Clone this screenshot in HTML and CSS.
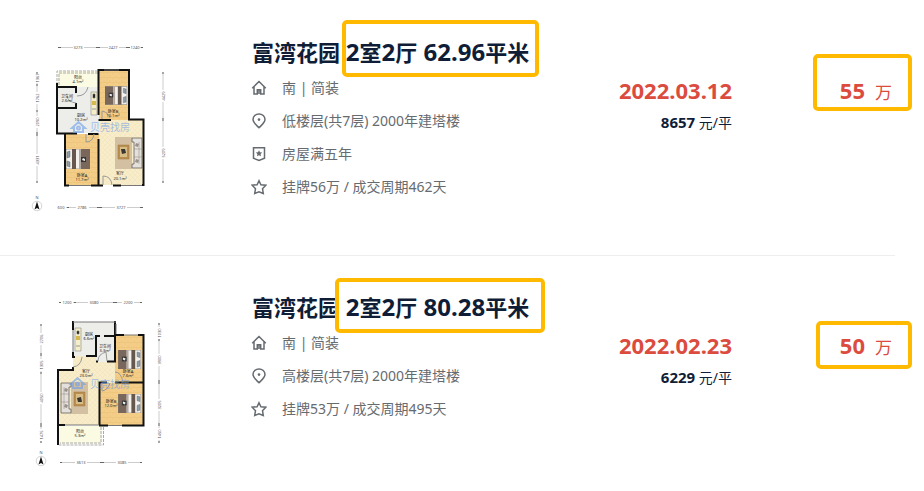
FILE: index.html
```html
<!DOCTYPE html>
<html lang="zh-CN">
<head>
<meta charset="utf-8">
<title>富湾花园 成交记录</title>
<link rel="stylesheet" href="styles.css">
</head>
<body>
<svg class="symbols" aria-hidden="true">
  <symbol id="i-home" viewBox="0 0 16 16"><path d="M1.200 8.200 8 1.500l6.800 6.700M3 6.800V14h3.300V9.700h3.400V14H13V6.800M8 10v4"/></symbol>
  <symbol id="i-pin" viewBox="0 0 16 16"><path d="M8 14.800C5 11.800 2 9.500 2 6.600a6 5.700 0 0 1 12 0c0 2.900-3 5.200-6 8.200z"/><circle cx="8" cy="6.600" r="1.300" class="solid"/></symbol>
  <symbol id="i-badge" viewBox="0 0 16 16"><path d="M2.500 1.700h11v10.600L8 14.500l-5.500-2.200z"/><path class="solid" d="m8 4.200 1 2.100 2.200.3-1.600 1.500.4 2.200-2-1-2 1 .4-2.200-1.600-1.500 2.200-.3z"/></symbol>
  <symbol id="i-star" viewBox="0 0 16 16"><path d="m8 1.700 1.900 4 4.900.5-3.300 3.500.8 4.800L8 12.900l-4.300 1.600.8-4.800L1.200 6.200l4.900-.5z"/></symbol>
  <symbol id="bed" viewBox="0 0 24 20">
    <path fill="#f4f1ec" stroke="#77706a" stroke-width=".6" d="M0 0h24v20H0z"/>
    <path fill="#78675a" d="M0 0h9v20H0z"/><path fill="#b3aaa3" d="M9 0h2v20H9z"/><path fill="#66584f" d="M14 0h4v20h-4z"/>
    <path fill="#333" d="M4 7h5v5H4z"/><path fill="#eee" d="m5 8 3 1-1 2-2-1z"/>
    <path fill="#8d9ead" stroke="#555" stroke-width=".4" d="m20 2 3 1v5l-3-1zM20 12l3-1v6l-3 1z"/>
  </symbol>
  <symbol id="sofa" viewBox="0 0 28 32">
    <path fill="#d3c0a2" d="M0 0h17v32H0z"/><path fill="#b88f4f" stroke="#a1783c" stroke-width=".5" d="M3 8h11v14H3z"/>
    <path fill="#d9bd86" d="M5 10h7v10H5z"/><path fill="#393531" d="M6 12h4l1 4-4 1z"/>
    <path fill="#e4e0dc" stroke="#665f59" stroke-width=".8" d="M17 1h10v30H17v-4h2V5h-2z"/>
    <path stroke="#8d8681" stroke-width=".5" fill="none" d="M19 12h8M19 20h8M24 5v22"/>
    <path fill="#99918c" d="m21 6 3 1-1 3-3-1zm0 16 3 1-1 3-3-1z"/>
  </symbol>
  <symbol id="compass" viewBox="0 0 12 18">
    <circle cx="6" cy="12" r="4.800" fill="none" stroke="#aaa" stroke-width=".5"/>
    <path fill="#111" d="m6 7.500 2.500 8L6 14l-2.500 1.500z"/>
  </symbol>
  <pattern id="wood" width="6" height="5" patternUnits="userSpaceOnUse"><path fill="#f4ce88" d="M0 0h6v5H0z"/><path stroke="#e8bb70" stroke-width=".4" d="M0 2.500h6M2 0v2.500M5 2.500V5"/></pattern>
  <pattern id="tile" width="5" height="5" patternUnits="userSpaceOnUse"><path fill="#f8edca" d="M0 0h5v5H0z"/><path stroke="#f0e0b4" stroke-width=".4" d="M0 0l5 5M5 0 0 5"/></pattern>
</svg>

<main class="deals">
  <article class="deal">
    <svg class="plan" viewBox="20 30 160 190" role="img" aria-label="户型图 62.96平米">
      <path fill="#ededea" d="M57 87h42v46H57z"/>
      <path fill="#fafbe2" d="M58 71h40v16H58z"/>
      <path fill="url(#wood)" d="M99 71h30v49H99zM65 134h34v51H65z"/>
      <path fill="url(#tile)" d="M99 120h44v65H99z"/>
      <path class="dash" d="M98 71H57v16M98 73H59v14"/>
      <path class="wall" d="M57 83v50.500h20M57 87h19v6M76 103v5H57M76 108h-1M98.500 69.500V115M97.500 70H129v49.500h14.500V185H142M98.500 120H111M98.500 139v47M98.500 134H88M65 134v51.500h4M91 185.500h12M113 185.500h8"/>
      <path class="window" d="M69 185.500h22M121 185.500h21M104 70h15"/>
      <path class="door" d="M77 96q9 0 11-9M76 103q-8-1-9-7M86 134v8q7 0 8-8M103 185v-9q8 0 9 9M102 119v-8q6 1 8 7"/>
      <path fill="#f4efca" stroke="#888" stroke-width=".6" d="M91 92h6v23h-6z"/><path fill="#d6b94e" d="M92 101h4v4h-4z"/><path stroke="#777" stroke-width=".7" d="M93 94h2v4h-2zM92 109h4"/>
      <use href="#bed" x="105" y="86" width="22" height="19"/>
      <use href="#bed" x="66" y="149" width="24" height="20" transform="rotate(180 78 159)"/>
      <use href="#sofa" x="115" y="137" width="28" height="32"/>
      <g class="watermark"><path d="m72 128 6.500-6 6.500 6h-2v4h-9v-4z"/><circle cx="78.500" cy="128" r="1.500"/><text x="90" y="131">贝壳找房</text></g>
      <g class="room"><text x="78" y="79">阳台</text><text x="78" y="83">4.1m²</text><text x="67" y="98">卫生间</text><text x="67" y="102">2.6m²</text><text x="81" y="117">厨房</text><text x="81" y="121">10.2m²</text><text x="113" y="113">卧室B</text><text x="113" y="117">10.1m²</text><text x="82" y="177">卧室A</text><text x="82" y="181">11.7m²</text><text x="120" y="175">客厅</text><text x="120" y="180">20.1m²</text></g>
      <path class="dim" d="M58 47.500h15M84 47.500h24M119 47.500h10M140 47.500h3M66 207.500h10M89 207.500h26M127 207.500h16M37 72v1M37 83v9M37 104v12M37 128v26M37 166v17M163 72v18M163 102v45M163 159v24"/>
      <path class="ticks" d="M58 47.500h3M96 47.500h4M126 47.500h4M141 47.500h2M67 207.500h2M97 207.500h5M140 207.500h3M37 72v2M37 84v2M37 110v2M37 132v4M37 181v2M163 72v2M163 118v3M163 181v2"/>
      <g class="size"><text x="78" y="49">3273</text><text x="113" y="49">2427</text><text x="135" y="49">1240</text><text x="61" y="209">600</text><text x="82" y="209">2786</text><text x="121" y="209">3727</text><text transform="translate(38.500 78)rotate(-90)">1367</text><text transform="translate(38.500 98)rotate(-90)">1762</text><text transform="translate(38.500 122)rotate(-90)">2090</text><text transform="translate(38.500 160)rotate(-90)">4331</text><text transform="translate(164.500 96)rotate(-90)">4429</text><text transform="translate(164.500 153)rotate(-90)">5209</text><text x="37" y="199">N</text></g>
      <use href="#compass" x="31" y="194" width="12" height="18"/>
    </svg>
    <section class="info">
      <h2 class="title"><span>富湾花园</span> <span class="size-spec"><b>2</b>室<b>2</b>厅<b> 62.96</b>平米<i class="mark mark-title"></i></span></h2>
      <ul class="facts">
        <li><svg class="icon"><use href="#i-home"/></svg>南 | 简装</li>
        <li><svg class="icon"><use href="#i-pin"/></svg>低楼层(共7层) 2000年建塔楼</li>
        <li><svg class="icon"><use href="#i-badge"/></svg>房屋满五年</li>
        <li><svg class="icon"><use href="#i-star"/></svg>挂牌56万 / 成交周期462天</li>
      </ul>
    </section>
    <div class="sold"><time class="date" datetime="2022-03-12">2022.03.12</time><p class="unit"><b>8657</b> 元/平</p></div>
    <p class="price"><b>55</b><span>万</span><i class="mark mark-price"></i></p>
  </article>

  <article class="deal">
    <svg class="plan" viewBox="20 285 160 190" role="img" aria-label="户型图 80.28平米">
      <path fill="#ededea" d="M73 322h43v34H73zM96 336h19v26H96z"/>
      <path fill="url(#tile)" d="M73 356h23v6h19v21H99v42H58v-55h15z"/>
      <path fill="url(#wood)" d="M115 335h28v48h-28zM99 383h44v42H99z"/>
      <path fill="#fafbe2" d="M59 426h43v18H59z"/>
      <path class="dash" d="M103.500 427v18H59M101 427v16H60"/>
      <path class="wall" d="M74 322h-1v8M73 352v5h2M86 356h10v-20h4M104 336h11v-15M96 361.500h2M107 361.500h8v-25M115 335h9M138 335h5.500v90.500H122M143 382.500H115M107 382.500H99.500v43M99 425.500h9M58 370h15v-3M58 369v76M58 425h7"/>
      <path class="window" d="M73 322h43M116 324v10M124 335h14M65 425h33M108 425.500h14M73 330v22"/>
      <path class="door" d="M73 367q8-1 9-10M98 361q0-7 8-9l1 9M115 372q6 0 8 10M102 383v8q6-1 8-8"/>
      <path fill="#f4efca" stroke="#888" stroke-width=".6" d="M75 328h6v23h-6z"/><path fill="#d6b94e" d="M76 336h4v4h-4z"/><path stroke="#777" stroke-width=".7" d="M77 331h2v3h-2zM76 346h4"/>
      <use href="#bed" x="118" y="350" width="23" height="19"/>
      <use href="#bed" x="118" y="394" width="23" height="19"/>
      <use href="#sofa" x="60" y="382" width="28" height="32" transform="rotate(180 74 398)"/>
      <g class="watermark"><path d="m71 384 6.500-6 6.500 6h-2v4h-9v-4z"/><circle cx="77.500" cy="384" r="1.500"/><text x="90" y="388">贝壳找房</text></g>
      <g class="room"><text x="89" y="336">厨房</text><text x="89" y="340">6.6m²</text><text x="105" y="348">卫生间</text><text x="105" y="352">3.3m²</text><text x="128" y="373">卧室A</text><text x="128" y="377">7.6m²</text><text x="86" y="373">客厅</text><text x="86" y="377">23.0m²</text><text x="111" y="403">卧室B</text><text x="111" y="407">12.0m²</text><text x="80" y="433">阳台</text><text x="80" y="437">5.3m²</text></g>
      <path class="dim" d="M59 302.500h2M73 302.500h15M100 302.500h22M134 302.500h8M60 462.500h15M87 462.500h29M128 462.500h14M41 324v9M41 345v14M41 371v21M41 404v25M41 441v2M159 323v4M159 339v15M159 366v33M159 411v17M159 440v3"/>
      <path class="ticks" d="M59 302.500h2M74 302.500h2M113 302.500h4M140 302.500h2M60 462.500h2M100 462.500h4M140 462.500h2M41 324v2M41 353v3M41 372v2M41 423v4M41 441v2M159 323v2M159 339v2M159 380v4M159 423v3M159 441v2"/>
      <g class="size"><text x="67" y="304">1200</text><text x="94" y="304">3080</text><text x="128" y="304">2200</text><text x="81" y="464">3613</text><text x="122" y="464">3085</text><text transform="translate(42.500 339)rotate(-90)">2706</text><text transform="translate(42.500 365)rotate(-90)">1305</text><text transform="translate(42.500 398)rotate(-90)">4050</text><text transform="translate(42.500 435)rotate(-90)">1475</text><text transform="translate(160.500 333)rotate(-90)">1030</text><text transform="translate(160.500 360)rotate(-90)">3900</text><text transform="translate(160.500 405)rotate(-90)">3205</text><text transform="translate(160.500 434)rotate(-90)">1450</text><text x="41" y="454">N</text></g>
      <use href="#compass" x="35" y="449" width="12" height="18"/>
    </svg>
    <section class="info">
      <h2 class="title"><span>富湾花园</span> <span class="size-spec"><b>2</b>室<b>2</b>厅<b> 80.28</b>平米<i class="mark mark-title mark-wide"></i></span></h2>
      <ul class="facts">
        <li><svg class="icon"><use href="#i-home"/></svg>南 | 简装</li>
        <li><svg class="icon"><use href="#i-pin"/></svg>高楼层(共7层) 2000年建塔楼</li>
        <li><svg class="icon"><use href="#i-star"/></svg>挂牌53万 / 成交周期495天</li>
      </ul>
    </section>
    <div class="sold"><time class="date" datetime="2022-02-23">2022.02.23</time><p class="unit"><b>6229</b> 元/平</p></div>
    <p class="price"><b>50</b><span>万</span><i class="mark mark-price mark-short"></i></p>
  </article>
</main>
</body>
</html>
```
FILE: styles.css
```css
* { box-sizing: border-box; }
body {
  margin: 0;
  background: #fff;
  color: #101d37;
  font-family: "Noto Sans", "Noto Sans CJK SC", sans-serif;
  font-size: 14px;
}
h2, p, ul { margin: 0; padding: 0; }
.symbols { position: absolute; width: 0; height: 0; }

.deals { padding: 1px 29px 0 0; }
.deal {
  display: grid;
  grid-template-columns: 252px 1fr auto 163px;
  min-height: 255px;
  border-bottom: 1px solid #eee;
}
.deal:last-child { border-bottom: 0; min-height: 230px; }

.info { padding-top: 32px; }
.title { font-size: 22px; line-height: 38px; font-weight: 700; white-space: nowrap; }
.title b { font-size: 24px; line-height: 24px; font-weight: 700; }
.size-spec { position: relative; }
.facts { list-style: none; margin-left: -1px; color: #666b70; }
.facts li { display: flex; align-items: center; gap: 15px; line-height: 33px; white-space: nowrap; }
.icon { width: 16px; height: 16px; fill: none; stroke: #666b70; stroke-width: 1.5; }
.solid { fill: #666b70; stroke: none; }

.sold { padding-top: 73px; text-align: right; white-space: nowrap; }
.date { display: block; font-size: 22px; line-height: 33px; font-weight: 700; color: #db4c3f; }
.unit { line-height: 30px; }
.unit b { font-size: 15px; }
.price {
  position: relative;
  display: flex;
  justify-content: flex-end;
  align-items: baseline;
  align-self: start;
  gap: 10px;
  margin-top: 73px;
  padding-right: 3px;
  color: #db4c3f;
  font-size: 17px;
  line-height: 33px;
}
.price b { font-size: 22px; }

/* highlight frames drawn over the listing */
.mark { position: absolute; border: 4px solid #ffba00; border-radius: 5px; }
.mark-title { inset: -17px -10px -10px -4px; }
.mark-wide { inset: -14px -16px -11px -11px; }
.mark-price { top: -20px; right: -17px; width: 99px; height: 57px; }
.mark-short { top: -8px; width: 96px; height: 48px; }

.plan { display: block; width: 160px; height: 190px; margin: 29px 0 0 20px; }
.wall { fill: none; stroke: #111; stroke-width: 2px; }
.window { fill: none; stroke: #777; stroke-width: 1px; }
.door { fill: none; stroke: #999; stroke-width: 1px; }
.dash { fill: none; stroke: #aaa; stroke-width: 1px; stroke-dasharray: 3 1; }
.dim { fill: none; stroke: #ccc; stroke-width: 1px; }
.ticks { fill: none; stroke: #666; stroke-width: 1px; }
.room text { font-size: 4px; text-anchor: middle; fill: #222; }
.size text { font-size: 4px; text-anchor: middle; fill: #555; }
.watermark { opacity: .6; fill: none; stroke: #6b9eea; stroke-width: 2px; }
.watermark text { font-size: 10px; fill: #6b9eea; stroke: none; }
```
